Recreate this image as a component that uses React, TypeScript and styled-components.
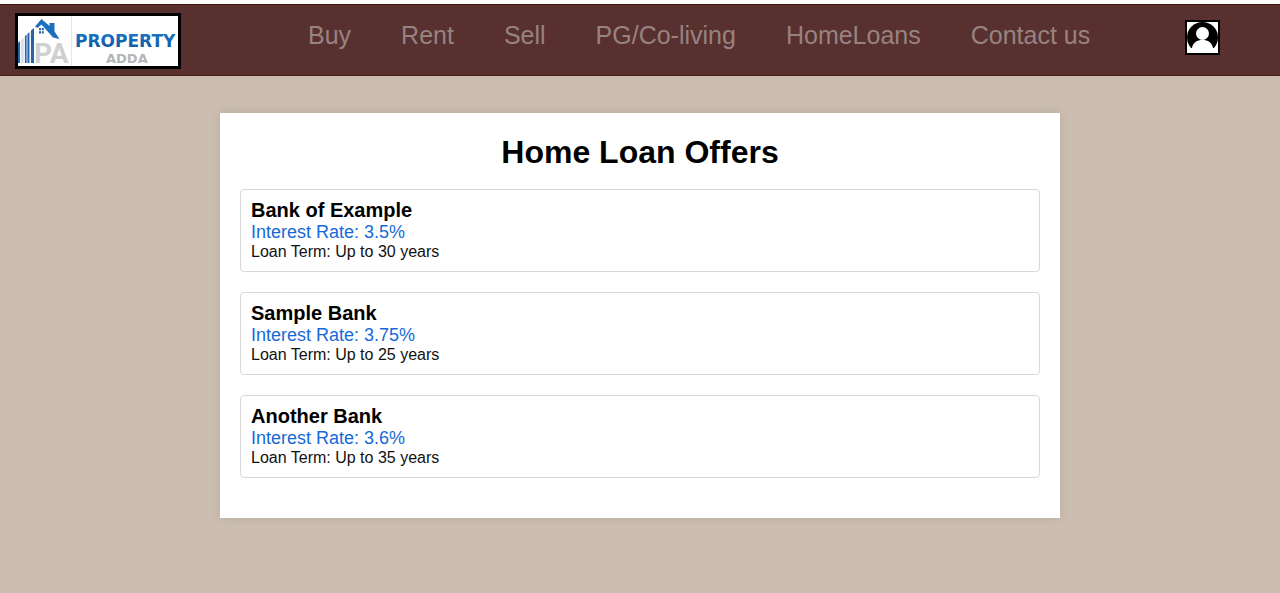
import React from "react";
import styled, { createGlobalStyle } from "styled-components";

const GlobalStyle = createGlobalStyle`
  * { box-sizing: border-box; margin: 0; padding: 0; }
  body {
    background: #cbbeb0;
    border-top: 4px solid #fdfcfb;
    font-family: "Liberation Sans", Arial, sans-serif;
    color: #000;
  }
`;

const Header = styled.header`
  display: flex;
  align-items: flex-start;
  padding: 8px 60px 6px 15px;
  background: #57302f;
  border-top: 1px solid #44150f;
  border-bottom: 1px solid #4d1d1e;
`;

const LogoLink = styled.a`
  flex: none;
  border: 3px solid #000;
  background: #fff;
  svg { display: block; overflow: visible; }
`;

const Nav = styled.nav`
  display: flex;
  gap: 50px;
  margin: 8px 0 0 127px;
`;

const NavLink = styled.a`
  font-size: 25px;
  line-height: 28px;
  color: #978380;
  text-decoration: none;
  white-space: nowrap;
`;

const ProfileButton = styled.button`
  flex: none;
  margin: 7px 0 0 auto;
  width: 35px;
  height: 35px;
  border: 2px solid #000;
  background: #fff;
  cursor: pointer;
  svg { display: block; }
`;

const Card = styled.main`
  max-width: 840px;
  margin: 37px auto;
  padding: 20px;
  background: #fff;
  box-shadow: 0 0 10px rgba(0, 0, 0, 0.1);
`;

const Title = styled.h1`
  margin-bottom: 18px;
  font-size: 32px;
  line-height: 38px;
  text-align: center;
`;

const OfferList = styled.ul`
  list-style: none;
`;

const Offer = styled.li`
  margin-bottom: 20px;
  padding: 10px;
  border: 1px solid #d8d8d8;
  border-radius: 4px;
`;

const BankName = styled.h2`
  margin-bottom: 2px;
  font-size: 20px;
  line-height: 20px;
`;

const Rate = styled.p`
  font-size: 18px;
  line-height: 21px;
  color: #1669d8;
`;

const Term = styled.p`
  font-size: 16px;
  line-height: 18px;
  color: #111;
`;

const links = ["Buy", "Rent", "Sell", "PG/Co-living", "HomeLoans", "Contact us"];

const offers = [
  { bank: "Bank of Example", rate: "3.5%", years: 30 },
  { bank: "Sample Bank", rate: "3.75%", years: 25 },
  { bank: "Another Bank", rate: "3.6%", years: 35 },
];

function Logo() {
  return (
    <svg width="160" height="50" viewBox="0 0 160 50" aria-label="Property Adda">
      <defs>
        <linearGradient id="blue" x1="0" y1="0" x2="0" y2="1">
          <stop offset="0" stopColor="#1c78c8" />
          <stop offset="1" stopColor="#0d5499" />
        </linearGradient>
      </defs>
      {/* tower bars */}
      <path d="M0 27 L16 12 V47 H0Z" fill="#d3dff0" />
      <path d="M0 27 L2 25 V47 H0Z M7 20 L8.5 18.5 V47 H7Z M9.5 18 L11.5 16 V47 H9.5Z M13 14.5 L16 12 V47 H13Z" fill="#2864a8" />
      <path d="M2.6 24 V47 M6.2 21 V47 M12.2 15 V47" stroke="#fff" strokeWidth="0.9" />
      {/* monogram */}
      <text x="16" y="47" fontFamily="Liberation Sans Narrow, Roboto, sans-serif" fontWeight="700" fontSize="28" fill="#cfd0d2">PA</text>
      {/* roof, chimney and window */}
      <path d="M17 10.5 L23.5 3 L31.5 10 V7 H36.5 V15.5 L41.5 23 L35 21.5 L23.5 8.5 L19.5 12Z" fill="#1b6fc0" />
      <path d="M21 12 h2 v2.3 h-2z M23.8 12 h2 v2.3 h-2z M21 15.2 h2 v2.3 h-2z M23.8 15.2 h2 v2.3 h-2z" fill="#2864a8" />
      <path d="M53.5 0 V50" stroke="#e7e7e7" />
      <g fontFamily="DejaVu Sans, sans-serif" fontWeight="700">
        <text x="57" y="31" fontSize="17" fill="url(#blue)">PROPERTY</text>
        <text x="88" y="47" fontSize="13" fill="#b5b5b7">ADDA</text>
      </g>
    </svg>
  );
}

function ProfileIcon() {
  return (
    <svg width="31" height="31" viewBox="0 0 31 31" aria-hidden="true">
      <circle cx="15.5" cy="15.5" r="15.5" fill="#000" />
      <circle cx="15.5" cy="11.5" r="6.5" fill="#fff" />
      <path d="M0 31 V26 H5 C6 20.5 10 18 15.5 18 C21 18 25 20.5 26 26 H31 V31Z" fill="#fff" />
    </svg>
  );
}

export default function App() {
  return (
    <>
      <GlobalStyle />
      <Header>
        <LogoLink href="#" aria-label="Property Adda"><Logo /></LogoLink>
        <Nav>
          {links.map((label) => <NavLink key={label} href="#">{label}</NavLink>)}
        </Nav>
        <ProfileButton aria-label="Profile"><ProfileIcon /></ProfileButton>
      </Header>
      <Card>
        <Title>Home Loan Offers</Title>
        <OfferList>
          {offers.map(({ bank, rate, years }) => (
            <Offer key={bank}>
              <BankName>{bank}</BankName>
              <Rate>Interest Rate: {rate}</Rate>
              <Term>Loan Term: Up to {years} years</Term>
            </Offer>
          ))}
        </OfferList>
      </Card>
    </>
  );
}
